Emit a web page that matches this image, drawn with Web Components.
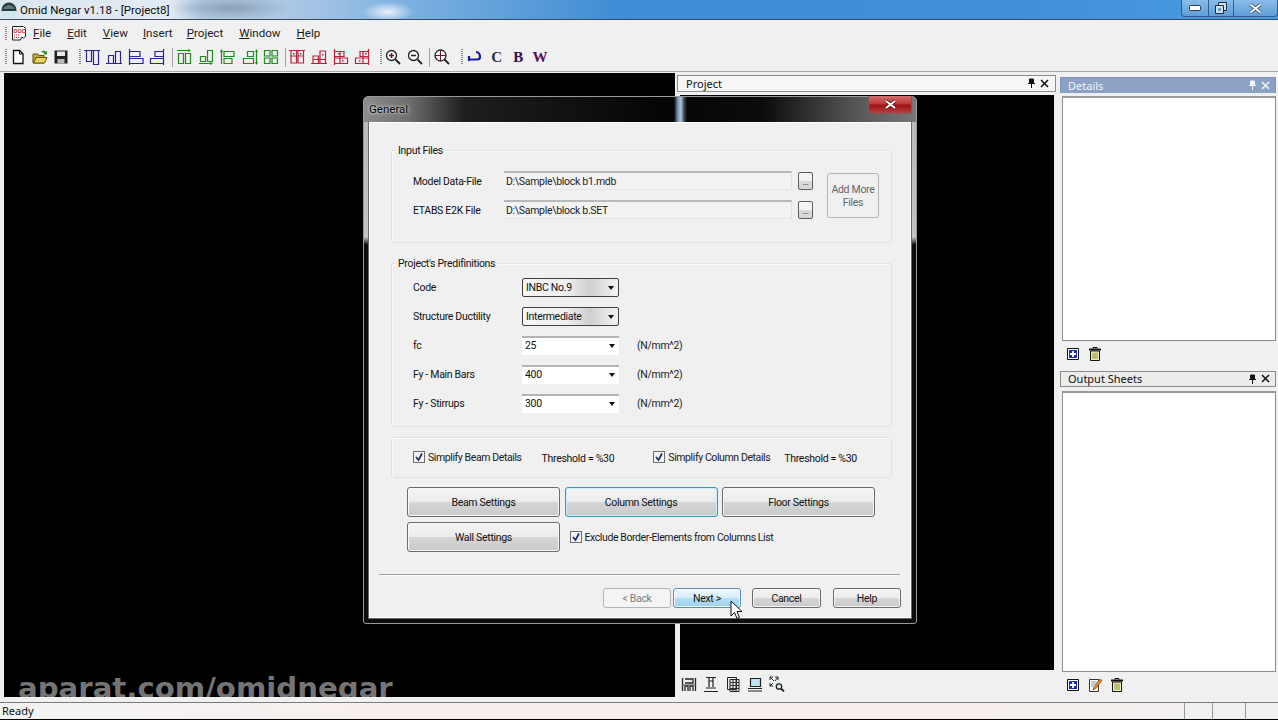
<!DOCTYPE html>
<html>
<head>
<meta charset="utf-8">
<title>Omid Negar</title>
<style>
    html, body { margin: 0; padding: 0; width: 1278px; height: 720px; overflow: hidden; background: #f0f0f0; }
    body { font-family: "Liberation Sans", Arial, sans-serif; font-size: 11px; color: #111; }
</style>
</head>
<body>
<omid-app></omid-app>
<script>
const FONT = '"Roboto", "Liberation Sans", Arial, sans-serif';
const TIGHT = `font: 10.5px ${FONT}; letter-spacing: -.3px;`;

const blue = '#26269c', green = '#1c8a1c', red = '#c0203c';
function lay(c, d, extra) {
    return `<path d="${d}" fill="none" stroke="${c}" stroke-width="1.2"/>${extra || ''}`;
}
const ICONS = {
    doc: `<path d="M1.5 1.5h11l2 2v8l-2 1.500-2-1-1 3h-8z" fill="#fff" stroke="#222"/><text x="2.500" y="7.500" font-size="5.500" font-weight="700" fill="#c02020" font-family="Liberation Sans">DOC</text><path d="M3 10h6M3 12.500h5" stroke="#c02020" stroke-dasharray="1 1"/>`,
    new: `<path d="M3.500 1.500h6l3.500 3.500v9.500h-9.500z" fill="#fff" stroke="#111" stroke-width="1.300"/><path d="M9.500 1.500v3.500h3.500" fill="none" stroke="#111"/>`,
    open: `<path d="M1 5h5l1 1.500h5v7.500H1z" fill="#caa93a" stroke="#5c5510"/><path d="M1.500 14l2.500-5.500h11L12.500 14z" fill="#e9d45c" stroke="#5c5510"/><path d="M9 3c2-2 4-1.500 5 0l1-1v3.500h-3.500l1-1c-1-1-2-1.500-3.500-1.500z" fill="#2b8a2b"/>`,
    save: `<path d="M1.500 1.500h13v13h-13z" fill="#222"/><path d="M4 2.500h8v4.500H4z" fill="#e8e8e8"/><path d="M4.500 10h7v4.500h-7z" fill="#b9b9b9"/>`,
    a1: lay(blue, 'M0 1.500h16M2.500 2v10.500h5V2M9.500 2v13.500h5V2'),
    a2: lay(blue, 'M0 14.500h16M2.500 14V6.500h5V14M9.500 14V2.500h5V14'),
    a3: lay(blue, 'M1.500 0v16M2 2.500h10v5H2M2 9.500h13v5H2'),
    a4: lay(blue, 'M14.500 0v16M14 2.500H6v5h8M14 9.500H1.500v5H14'),
    g1: lay(green, 'M1 1.500h11M2.500 4.500h5v10h-5zM9.500 4.500h5v10h-5z', `<path d="M12 0l3 1.500-3 1.500z" fill="${green}"/>`),
    g2: lay(green, 'M1 14.500h11M2.500 7.500h5v5h-5zM9.500 1.500h5v11h-5z', `<path d="M12 13l3 1.500-3 1.500z" fill="${green}"/>`),
    g3: lay(green, 'M1.500 1v14M4 2.500h10v5H4zM4 9.500h8v5H4z', `<path d="M0 3l1.500-3 1.500 3z" fill="${green}"/>`),
    g4: lay(green, 'M14.500 1v14M1.500 9.500h10v5h-10zM5.500 2.500h6v5h-6z', `<path d="M13 3l1.500-3 1.500 3zM13 13l1.500 3 1.500-3z" fill="${green}"/>`),
    g5: lay(green, 'M1.500 1.500h5.500v5.500H1.500zM9 1.500h5.500v5.500H9zM1.500 9h5.500v5.500H1.500zM9 9h5.500v5.500H9z'),
    r1: lay(red, 'M0 1.500h16M2 2v12h5.500V2M9 2v12h5.500V2M2 7h5.500M9 7h5.500', `<path d="M4 4h1.500v1.500H4zM11 4h1.500v1.500H11z" fill="${red}"/>`),
    r2: lay(red, 'M0 14.500h16M2 14V7h5.500v7M9 14V2h5.500v12M2 10.500h12.500', `<path d="M6 9.500h1.500V11H6zM11 5h1.500v1.500H11z" fill="${red}"/>`),
    r3: lay(red, 'M1.500 0v16M2 2.500h9v5H2M2 9h12.500v5.500H2M7 2.500v12', `<path d="M5 4h1.500v1.500H5zM9 11h1.500v1.500H9z" fill="${red}"/>`),
    r4: lay(red, 'M14.500 0v16M14 2.500H6v5h8M14 9H1.500v5.500H14M9 2.500v12', `<path d="M11 4h1.500v1.500H11zM5 11h1.500v1.500H5z" fill="${red}"/>`),
    zin: `<circle cx="6.500" cy="6.500" r="5" fill="#f8f8f8" stroke="#222" stroke-width="1.300"/><path d="M10.500 10.500l4.500 4.500" stroke="#222" stroke-width="1.800"/><path d="M4 6.500h5M6.500 4v5" stroke="#7a1030" stroke-width="1.500"/>`,
    zout: `<circle cx="6.500" cy="6.500" r="5" fill="#f8f8f8" stroke="#222" stroke-width="1.300"/><path d="M10.500 10.500l4.500 4.500" stroke="#222" stroke-width="1.800"/><path d="M4 6.500h5" stroke="#222" stroke-width="1.500"/>`,
    zall: `<circle cx="6.500" cy="6.500" r="5.500" fill="#f8f8f8" stroke="#222" stroke-width="1.300"/><path d="M10.500 10.500l4.500 4.500" stroke="#222" stroke-width="1.800"/><path d="M1 6.500h11M6.500 1v11" stroke="#7a1030"/>`,
    curve: `<path d="M9 3c3 0 4 3 4 5s-1 2.500-3 2.500H3" fill="none" stroke="#1a1aa0" stroke-width="2.200"/><path d="M2 7v5" stroke="#1a1aa0" stroke-width="2.200"/>`,
    add: `<path d="M2.500 2.500h11v11h-11z" fill="#fff" stroke="#111"/><path d="M4 4h8v8H4z" fill="#1c2cc0"/><path d="M5 8h6M8 5v6" stroke="#fff" stroke-width="1.800"/>`,
    trash: `<path d="M2 3.500h12" stroke="#111" stroke-width="2"/><path d="M6 2.500V1.500h4v1" stroke="#111" fill="none"/><path d="M3.500 5h9v9.500h-9z" fill="#f4f1c8" stroke="#111"/><path d="M6 6.500v6.500M8 6.500v6.500M10 6.500v6.500" stroke="#8a8a20"/>`,
    edit: `<path d="M2.500 2.500h9v12h-9z" fill="#fff" stroke="#333"/><path d="M4 5h6M4 7h5M4 9h3" stroke="#8a9ab0"/><path d="M6 13l1-3 6-8 2 1.500-6 8z" fill="#e08a20" stroke="#704010" stroke-width=".6"/>`,
    b1: `<path d="M1.500 2v13M14.500 2v13M4 3h8v4H4M4 15v-5h3v5M9 15v-5h3v5" fill="none" stroke="#222" stroke-width="1.300"/><path d="M1 9h14" stroke="#555"/>`,
    b2: `<path d="M1 15.500h14M3 1.500h10M6 2v9M10 2v9M3 12h10M6 5h4" fill="none" stroke="#222" stroke-width="1.200"/>`,
    b3: `<path d="M2.500 1.500h9v12h-9zM5 3.500h9v12H5z" fill="#e8e8e8" stroke="#222"/><path d="M5 6.500h9M5 9.500h9M5 12.500h9M8 3.500v12M11 3.500v12" stroke="#333"/>`,
    b4: `<path d="M3.500 2.500h10v8h-10z" fill="#bfe3f2" stroke="#222" stroke-width="1.200"/><path d="M1 12.500h14M1 15h14" stroke="#222" stroke-width="1.200"/>`,
    b5: `<path d="M1 1l4 4M1 1h3M1 1v3M9 1L6 5M9 1H6M9 1v3M1 10l3-3M1 10h3M1 10V7" fill="none" stroke="#222"/><circle cx="10" cy="10.500" r="2.700" fill="#d8eef8" stroke="#222" stroke-width="1.300"/><path d="M12 12.500l3 3" stroke="#222" stroke-width="1.800"/>`,
};

class TbIcon extends HTMLElement {
    connectedCallback() {
        if (this.shadowRoot) return;
        this.attachShadow({ mode: 'open' });
        const name = this.getAttribute('name');
        this.shadowRoot.innerHTML = `
            <style>:host { display: block; width: 16px; height: 16px; flex: none; } svg { display: block; }</style>
            <svg width="16" height="16" viewBox="0 0 16 16">${ICONS[name]}</svg>`;
    }
}
customElements.define('tb-icon', TbIcon);

class OmidTitlebar extends HTMLElement {
    constructor() {
        super();
        this.attachShadow({ mode: 'open' });
        this.shadowRoot.innerHTML = `
            <style>
                :host {
                    display: flex; align-items: center; height: 20px; box-sizing: border-box;
                    border-bottom: 1px solid #3a4a5c;
                    background:
                        radial-gradient(ellipse 26px 10px at 388px 12px, #e8f2fb 0, transparent 100%),
                        radial-gradient(ellipse 60px 12px at 230px 8px, #8aa0b8 0, transparent 100%),
                        linear-gradient(90deg, #dbe6ef 0, #e3ebf3 170px, #b4cce2 200px, #a8c6e4 300px, #78aee0 420px, #3f8cd4 620px, #3f8fd8 1000px, #4a9ce0 1278px);
                }
                .icon { margin-left: 1px; width: 16px; height: 16px; }
                .title { margin-left: 3px; font: 11.5px Roboto, sans-serif; color: #0a0a0a; white-space: nowrap; }
                .ctl {
                    margin-left: auto; align-self: flex-start; display: flex; width: 97px;
                    border: 1px solid #2c5f8e; border-top: 0; border-radius: 0 0 4px 4px; box-sizing: border-box; height: 17px;
                    background: linear-gradient(#8abce8, #5f9ed8);
                }
                .ctl div { display: flex; align-items: center; justify-content: center; border-right: 1px solid #2c5f8e; }
                .ctl div:last-child { border: 0; flex: 1; }
            </style>
            <svg class="icon" viewBox="0 0 16 16">
                <circle cx="8" cy="8" r="7.500" fill="#2c3a3e"/>
                <path d="M.5 9h15a7.500 7.500 0 0 1-15 0z" fill="#cfe8e8"/>
                <path d="M2 7c2-3 4-4 6-4s4 1 6 4z" fill="#5a7a78"/>
            </svg>
            <span class="title">Omid Negar v1.18 - [Project8]</span>
            <div class="ctl">
                <div style="width:26px">
                    <svg width="12" height="6"><rect x=".5" y=".5" width="11" height="5" rx="1" fill="#fff" stroke="#2a3a4c"/></svg>
                </div>
                <div style="width:24px">
                    <svg width="12" height="12"><path d="M3.500.5h8v8h-8z" fill="#cfe0f0" stroke="#1c2c40"/><path d="M.5 3.500h8v8h-8z" fill="#cfe0f0" stroke="#1c2c40"/><rect x="3" y="6" width="3" height="3" fill="#6a9ccc"/></svg>
                </div>
                <div>
                    <svg width="13" height="11"><path d="M1.500 1.500l10 8M11.500 1.500l-10 8" stroke="#24384c" stroke-width="3.400"/><path d="M1.500 1.500l10 8M11.500 1.500l-10 8" stroke="#fff" stroke-width="2"/></svg>
                </div>
            </div>`;
    }
}
customElements.define('omid-titlebar', OmidTitlebar);

class OmidMenubar extends HTMLElement {
    constructor() {
        super();
        this.attachShadow({ mode: 'open' });
        const items = [['F', 'ile', 6], ['E', 'dit', 16], ['V', 'iew', 16], ['I', 'nsert', 15], ['P', 'roject', 14], ['W', 'indow', 16], ['H', 'elp', 16]];
        const html = items.map(([k, r, gap]) => `<span style="margin-left:${gap}px"><u>${k}</u>${r}</span>`).join('');
        this.shadowRoot.innerHTML = `
            <style>
                :host { display: flex; align-items: center; height: 25px; padding: 1px 0 0 5px; box-sizing: border-box; background: #f1f0f0; font: 11.6px ${FONT}; color: #1a1a1a; }
                .grip { width: 2px; height: 13px; margin-right: 4px; background: repeating-linear-gradient(#888 0 1px, transparent 1px 2px); }
                span { white-space: nowrap; }
                u { text-underline-offset: 1px; }
            </style>
            <div class="grip"></div>
            <tb-icon name="doc"></tb-icon>
            ${html}`;
    }
}
customElements.define('omid-menubar', OmidMenubar);

class OmidToolbar extends HTMLElement {
    constructor() {
        super();
        this.attachShadow({ mode: 'open' });
        const ic = (n) => `<tb-icon name="${n}"></tb-icon>`;
        const ltr = (t, c) => `<b style="color:${c};width:16px;text-align:center">${t}</b>`;
        this.shadowRoot.innerHTML = `
            <style>
                :host {
                    display: flex; align-items: center; height: 27px; padding: 0 0 2px 5px; box-sizing: border-box;
                    background: #f1f0f0; border-bottom: 1px solid #a8a8a8;
                }
                .set { display: flex; align-items: center; gap: 5.700px; }
                .grip { width: 2px; height: 16px; flex: none; background: repeating-linear-gradient(#888 0 1px, transparent 1px 2px); }
                .sep { width: 1px; height: 19px; background: #a8a8a8; flex: none; }
                b { font: 700 15px "Liberation Serif", serif; flex: none; }
            </style>
            <div class="grip" style="margin-right:3px"></div>
            <div class="set">${ic('new')}${ic('open')}${ic('save')}</div>
            <div class="grip" style="margin-left:10px;margin-right:3px"></div>
            <div class="set">${ic('a1')}${ic('a2')}${ic('a3')}${ic('a4')}</div>
            <div class="sep" style="margin:0 3px 0 7px"></div>
            <div class="set">${ic('g1')}${ic('g2')}${ic('g3')}${ic('g4')}${ic('g5')}</div>
            <div class="sep" style="margin:0 3px 0 6px"></div>
            <div class="set">${ic('r1')}${ic('r2')}${ic('r3')}${ic('r4')}</div>
            <div class="grip" style="margin-left:10px;margin-right:3px"></div>
            <div class="set">${ic('zin')}${ic('zout')}</div>
            <div class="sep" style="margin:0 4px 0 6px"></div>
            ${ic('zall')}
            <div class="grip" style="margin-left:11px;margin-right:3px"></div>
            <div class="set" style="margin-left:1px">${ic('curve')}${ltr('C', '#223344')}${ltr('B', '#301050')}${ltr('W', '#501060')}</div>`;
    }
}
customElements.define('omid-toolbar', OmidToolbar);

class DockPanel extends HTMLElement {
    constructor() {
        super();
        this.attachShadow({ mode: 'open' });
        const active = this.getAttribute('variant') === 'blue';
        const white = this.getAttribute('variant') === 'white';
        const col = active ? '#f2f5fa' : '#111';
        this.shadowRoot.innerHTML = `
            <style>
                :host { display: flex; flex-direction: column; flex: none; }
                .head {
                    flex: none; height: ${white ? 17 : 16}px; display: flex; align-items: center;
                    padding: 0 ${white ? 6 : 5}px 1px ${white ? 8 : 7}px; box-sizing: border-box;
                    font: 11px "Noto Sans", sans-serif; color: ${col};
                    background: ${active ? '#8ca2c4' : white ? '#f6f6f6' : '#ececec'};
                    border: 1px solid ${active ? '#7f96ba' : '#8c8c8c'};
                    ${active ? 'border-bottom-width: 0;' : ''}
                }
                .head span { flex: 1; }
                svg { margin-left: 4px; display: block; }
            </style>
            <div class="head">
                <span>${this.getAttribute('heading')}</span>
                <svg width="9" height="10"><path d="M2.500 1h4v4.500h-4zM1 5.500h7M4.500 6v4" fill="${col}" stroke="${col}"/></svg>
                <svg width="9" height="9"><path d="M1 1l7 7M8 1L1 8" stroke="${col}" stroke-width="1.500"/></svg>
            </div>
            <slot></slot>`;
    }
}
customElements.define('dock-panel', DockPanel);

class ListBox extends HTMLElement {
    constructor() {
        super();
        this.attachShadow({ mode: 'open' });
        this.shadowRoot.innerHTML = `<style>:host { display: block; background: #fff; border: 1px solid #8c8c8c; border-top: 2px solid #9a9a9a; box-sizing: border-box; }</style>`;
    }
}
customElements.define('list-box', ListBox);

class IconRow extends HTMLElement {
    constructor() {
        super();
        this.attachShadow({ mode: 'open' });
        this.shadowRoot.innerHTML = `<style>:host { display: flex; align-items: center; gap: 6px; flex: none; }</style><slot></slot>`;
    }
}
customElements.define('icon-row', IconRow);

class WinButton extends HTMLElement {
    constructor() {
        super();
        this.attachShadow({ mode: 'open' });
        this.shadowRoot.innerHTML = `
            <style>
                :host {
                    display: flex; align-items: center; justify-content: center; box-sizing: border-box; text-align: center;
                    ${TIGHT} color: #111; border: 1px solid #6a6a6a; border-radius: 3px;
                    box-shadow: inset 0 0 0 1px #f8f8f8;
                    background: linear-gradient(#f4f4f4 0, #ececec 48%, #d6d6d6 52%, #c9c9c9 100%);
                }
                :host([state=focus]) { border: 1.500px solid #2f9cb8; box-shadow: inset 0 0 0 1px #c8f0fa; }
                :host([state=hot]) { border-color: #5a8fb4; background: linear-gradient(#eef8fd 0, #d8eefa 48%, #b4dff5 52%, #9cd2ee 100%); }
                :host([state=off]) { color: #7c7c7c; border-color: #b0b4b6; background: #f4f4f4; box-shadow: none; }
                :host([state=flat]) { color: #666; border-color: #b4b4b4; background: #f0f0f0; box-shadow: none; }
            </style>
            <slot></slot>`;
    }
}
customElements.define('win-button', WinButton);

class WinCheck extends HTMLElement {
    constructor() {
        super();
        this.attachShadow({ mode: 'open' });
        this.shadowRoot.innerHTML = `
            <style>
                :host { display: inline-flex; align-items: center; gap: 3px; ${TIGHT} letter-spacing: -.4px; color: #1a1a1a; white-space: nowrap; }
                svg { display: block; flex: none; }
            </style>
            <svg width="12" height="12"><rect x=".5" y=".5" width="11" height="11" fill="#f2f2f2" stroke="#6e6e6e"/><path d="M3 6l2.500 3L9 2.500" fill="none" stroke="#1c2c70" stroke-width="1.700"/></svg>
            <slot></slot>`;
    }
}
customElements.define('win-check', WinCheck);

class WinCombo extends HTMLElement {
    constructor() {
        super();
        this.attachShadow({ mode: 'open' });
        this.shadowRoot.innerHTML = `
            <style>
                :host {
                    display: flex; align-items: center; box-sizing: border-box; width: 97px; height: 19px; padding: 0 4px 2px 3px;
                    ${TIGHT} color: #111; background: #fff; border-top: 2px solid #b4b4b4;
                }
                :host([drop]) {
                    border: 1px solid #404040; border-radius: 2px; padding-bottom: 0;
                    background: linear-gradient(90deg, #f5f5f5 0, #f0f0f0 45%, #cfcfcf 70%, #f4f4f4 100%);
                }
                span { flex: 1; }
                i { width: 0; height: 0; border: 3.500px solid transparent; border-top: 4px solid #111; border-bottom: 0; }
            </style>
            <span><slot></slot></span><i></i>`;
    }
}
customElements.define('win-combo', WinCombo);

class WinGroup extends HTMLElement {
    constructor() {
        super();
        this.attachShadow({ mode: 'open' });
        const label = this.getAttribute('label');
        this.shadowRoot.innerHTML = `
            <style>
                :host {
                    display: block; position: relative; box-sizing: border-box; margin: 0 18px 0 21px;
                    border: 1px solid #e2e2e2; box-shadow: inset 1px 1px 0 #fafafa; border-radius: 2px;
                }
                .legend { position: absolute; left: 4px; top: -7px; padding: 0 2px; background: #f0f0f0; ${TIGHT} color: #111; white-space: nowrap; }
            </style>
            ${label ? `<div class="legend">${label}</div>` : ''}
            <slot></slot>`;
    }
}
customElements.define('win-group', WinGroup);

class FileRow extends HTMLElement {
    constructor() {
        super();
        this.attachShadow({ mode: 'open' });
        this.shadowRoot.innerHTML = `
            <style>
                :host { display: grid; grid-template-columns: 91px 288px 21px; align-items: center; height: 19px; ${TIGHT} color: #111; }
                span { margin-top: 1px; }
                .field { box-sizing: border-box; height: 19px; display: flex; align-items: center; padding-left: 2px; border-top: 2px solid #b8b8b8; border-right: 1px solid #e0e0e0; border-bottom: 1px solid #e6e6e6; background: #f2f2f2; color: #222; }
                .dots { margin-left: 6px; width: 15px; height: 18px; box-sizing: border-box; border: 1px solid #5e5e5e; border-radius: 2px; background: linear-gradient(#f4f4f4 50%, #d8d8d8 50%); display: flex; align-items: flex-end; justify-content: center; font-size: 9px; line-height: 13px; }
            </style>
            <span>${this.getAttribute('label')}</span>
            <div class="field">${this.getAttribute('value')}</div>
            <div class="dots">...</div>`;
    }
}
customElements.define('file-row', FileRow);

class ParamRow extends HTMLElement {
    constructor() {
        super();
        this.attachShadow({ mode: 'open' });
        const unit = this.getAttribute('unit');
        this.shadowRoot.innerHTML = `
            <style>
                :host { display: grid; grid-template-columns: 109px 97px auto; align-items: center; height: 19px; ${TIGHT} color: #111; }
                .u { margin-left: 18px; color: #222; }
            </style>
            <span>${this.getAttribute('label')}</span>
            <win-combo ${this.hasAttribute('drop') ? 'drop' : ''}>${this.getAttribute('value')}</win-combo>
            ${unit ? `<span class="u">${unit}</span>` : ''}`;
    }
}
customElements.define('param-row', ParamRow);

class GeneralDialog extends HTMLElement {
    constructor() {
        super();
        this.attachShadow({ mode: 'open' });
        this.shadowRoot.innerHTML = `
            <style>
                :host {
                    position: absolute; left: 363px; top: 96px; width: 554px; height: 528px; box-sizing: border-box;
                    display: flex; flex-direction: column; padding: 0 5px 5px 5px;
                    border: 1px solid #9a9a9a; border-radius: 5px 5px 3px 3px;
                    background: linear-gradient(#b8b8b8 0, #c4c4c4 140px, #0c0c0c 148px);
                    ${TIGHT} color: #111;
                }
                .title {
                    flex: none; height: 25px; margin: 0 -5px; padding: 0 0 2px 5px; display: flex; align-items: center; position: relative;
                    border-radius: 4px 4px 0 0; box-sizing: border-box;
                    background:
                        linear-gradient(90deg, transparent 310px, #7e9cb8 314px, #b0c4d8 317px, #3c4a58 320px, transparent 323px),
                        linear-gradient(90deg, #8c8c8c 0, #6e6e6e 45px, #1e1e1e 100px, #050505 300px, #0c0c0c 400px, #555 490px, #787878 554px);
                    font: 11.500px ${FONT}; letter-spacing: 0; color: #000;
                    text-shadow: 0 0 4px #ddd, 0 0 2px #ddd;
                }
                .close {
                    position: absolute; right: 4px; top: -1px; width: 44px; height: 18px; box-sizing: border-box;
                    border: 1px solid #7a5a5a; border-top: 0; border-radius: 0 0 4px 4px;
                    background: linear-gradient(#d07070 0, #c03838 45%, #9c1414 55%, #b84040 100%);
                    display: flex; align-items: center; justify-content: center;
                }
                .client {
                    flex: 1; background: #f0f0f0; border: 1px solid #fff; outline: 1px solid #6a6a6a; display: flex; flex-direction: column;
                    padding-top: 27px; box-sizing: border-box;
                }
                .rows1 { display: flex; flex-direction: column; gap: 10px; padding: 20px 0 0 21px; }
                .rows2 { display: flex; flex-direction: column; gap: 10px; padding: 14px 0 0 21px; }
                .opts { display: flex; align-items: center; height: 39px; padding-left: 21px; }
                .opts span { white-space: nowrap; margin-top: 1px; }
                .btns {
                    display: grid; grid-template-columns: 153px 153px 153px; column-gap: 4.500px; row-gap: 5px;
                    margin: 9px 0 0 37px;
                }
                .btns win-button { height: 30px; }
                .sep { height: 1px; background: #a0a0a0; margin: 22px 10px 0 9px; border-bottom: 1px solid #fafafa; }
                .foot { display: flex; margin: 12px 0 0 233px; }
                .foot win-button { height: 20px; }
            </style>
            <div class="title">General
                <div class="close"><svg width="13" height="11"><path d="M2 2l9 7M11 2l-9 7" stroke="#5a1010" stroke-width="3.600"/><path d="M2 2l9 7M11 2l-9 7" stroke="#fff" stroke-width="2.200"/></svg></div>
            </div>
            <div class="client">
                <win-group label="Input Files" style="height:93px">
                    <div class="rows1">
                        <file-row label="Model Data-File" value="D:\\Sample\\block b1.mdb"></file-row>
                        <file-row label="ETABS E2K File" value="D:\\Sample\\block b.SET"></file-row>
                    </div>
                    <win-button state="flat" style="position:absolute;left:435px;top:22px;width:52px;height:45px;line-height:13px">Add More<br>Files</win-button>
                </win-group>
                <win-group label="Project's Predifinitions" style="height:164px;margin-top:20px">
                    <div class="rows2">
                        <param-row label="Code" value="INBC No.9" drop></param-row>
                        <param-row label="Structure Ductility" value="Intermediate" drop></param-row>
                        <param-row label="fc" value="25" unit="(N/mm^2)"></param-row>
                        <param-row label="Fy - Main Bars" value="400" unit="(N/mm^2)"></param-row>
                        <param-row label="Fy - Stirrups" value="300" unit="(N/mm^2)"></param-row>
                    </div>
                </win-group>
                <win-group style="height:41px;margin-top:10px">
                    <div class="opts">
                        <win-check style="margin-top:-1px">Simplify Beam Details</win-check>
                        <span style="margin-left:20px">Threshold = %30</span>
                        <win-check style="margin-left:39px;margin-top:-1px">Simplify Column Details</win-check>
                        <span style="margin-left:14px">Threshold = %30</span>
                    </div>
                </win-group>
                <div class="btns">
                    <win-button>Beam Settings</win-button>
                    <win-button state="focus">Column Settings</win-button>
                    <win-button>Floor Settings</win-button>
                    <win-button>Wall Settings</win-button>
                    <win-check style="grid-column: 2 / 4; margin-left:5px">Exclude Border-Elements from Columns List</win-check>
                </div>
                <div class="sep"></div>
                <div class="foot">
                    <win-button state="off" style="width:68px">&lt; Back</win-button>
                    <win-button state="hot" style="width:68px;margin-left:2px">Next &gt;</win-button>
                    <win-button style="width:69px;margin-left:11px">Cancel</win-button>
                    <win-button style="width:68px;margin-left:12px">Help</win-button>
                </div>
            </div>`;
    }
}
customElements.define('general-dialog', GeneralDialog);

class OmidStatusbar extends HTMLElement {
    constructor() {
        super();
        this.attachShadow({ mode: 'open' });
        this.shadowRoot.innerHTML = `
            <style>
                :host {
                    display: grid; grid-template-columns: 1185px 28px 33px 1fr; height: 18px; box-sizing: border-box;
                    border-top: 1px solid #7c7c7c; padding-bottom: 1px;
                    background: linear-gradient(#000, #000) 0 100% / 100% 1px no-repeat, linear-gradient(90deg, #f3f3f3, #f8eeec 40%, #f8efec 70%, #f0f0f0);
                    font: 11px "Noto Sans", sans-serif; color: #111;
                }
                div { padding: 0 0 0 2px; line-height: 15px; border-right: 1px solid #999; box-sizing: border-box; }
                div:last-child { border: 0; }
            </style>
            <div>Ready</div><div></div><div></div><div></div>`;
    }
}
customElements.define('omid-statusbar', OmidStatusbar);

class OmidApp extends HTMLElement {
    constructor() {
        super();
        this.attachShadow({ mode: 'open' });
        this.shadowRoot.innerHTML = `
            <style>
                :host { display: flex; flex-direction: column; position: relative; width: 1278px; height: 720px; overflow: hidden; background: #f0f0f0; }
                .work {
                    flex: 1; min-height: 0; display: grid; grid-template-columns: 671px 379px 218px;
                    padding: 1px 0 5px 4px; box-sizing: border-box; background: #f0f0f0;
                }
                .view { position: relative; overflow: hidden; background: #000; }
                .mark {
                    position: absolute; left: 14px; bottom: -7.500px; font: 700 29.2px "DejaVu Sans", sans-serif; color: #747474; white-space: nowrap;
                }
                .proj { padding: 2px 0 0 2px; display: flex; flex-direction: column; box-sizing: border-box; }
                .black { background: #000; margin: 3px 2px 0 3px; height: 575px; }
                .right { margin-left: 6px; display: flex; flex-direction: column; width: 216px; padding-top: 4px; }
                list-box { margin: 3px 0 0 2px; }
            </style>
            <omid-titlebar></omid-titlebar>
            <omid-menubar></omid-menubar>
            <omid-toolbar></omid-toolbar>
            <div class="work">
                <div class="view"><div class="mark">aparat.com/omidnegar</div></div>
                <div class="proj">
                    <dock-panel heading="Project" variant="white" style="width:379px">
                        <div class="black"></div>
                    </dock-panel>
                    <icon-row style="padding:6px 0 0 4px">
                        <tb-icon name="b1"></tb-icon><tb-icon name="b2"></tb-icon><tb-icon name="b3"></tb-icon><tb-icon name="b4"></tb-icon><tb-icon name="b5"></tb-icon>
                    </icon-row>
                </div>
                <div class="right">
                    <dock-panel heading="Details" variant="blue">
                        <list-box style="height:245px"></list-box>
                    </dock-panel>
                    <icon-row style="padding:4px 0 0 5px;height:22px;box-sizing:border-box">
                        <tb-icon name="add"></tb-icon><tb-icon name="trash"></tb-icon>
                    </icon-row>
                    <dock-panel heading="Output Sheets" style="margin-top:8px">
                        <list-box style="height:281px;margin-top:4px"></list-box>
                    </dock-panel>
                    <icon-row style="padding:5px 0 0 5px">
                        <tb-icon name="add"></tb-icon><tb-icon name="edit"></tb-icon><tb-icon name="trash"></tb-icon>
                    </icon-row>
                </div>
            </div>
            <omid-statusbar></omid-statusbar>
            <general-dialog></general-dialog>
            <svg style="position:absolute;left:730px;top:600px" width="14" height="20" viewBox="0 0 14 20">
                <path d="M1 1v15l3.500-3.500 2.500 6 2.500-1-2.500-6h5z" fill="#fff" stroke="#111"/>
            </svg>`;
    }
}
customElements.define('omid-app', OmidApp);
</script>
</body>
</html>
